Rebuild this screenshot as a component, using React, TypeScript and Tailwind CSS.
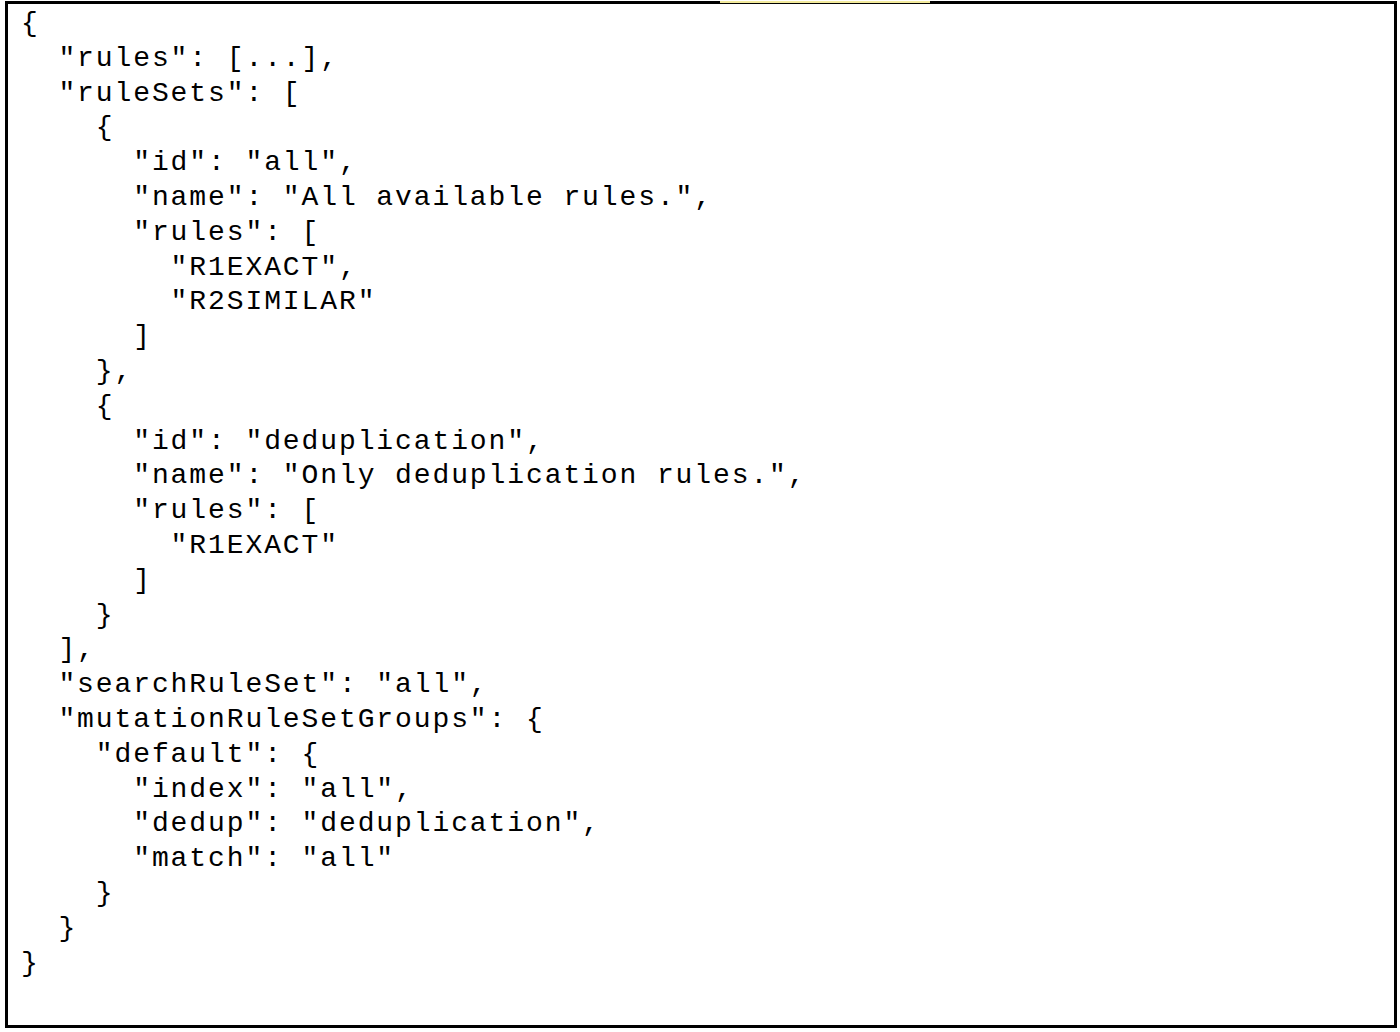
const code = `{
  "rules": [...],
  "ruleSets": [
    {
      "id": "all",
      "name": "All available rules.",
      "rules": [
        "R1EXACT",
        "R2SIMILAR"
      ]
    },
    {
      "id": "deduplication",
      "name": "Only deduplication rules.",
      "rules": [
        "R1EXACT"
      ]
    }
  ],
  "searchRuleSet": "all",
  "mutationRuleSetGroups": {
    "default": {
      "index": "all",
      "dedup": "deduplication",
      "match": "all"
    }
  }
}`;

export default function App() {
  return (
    <div className="relative w-[1400px] h-[1032px] bg-white">
      {/* faint highlight bleeding over the top edge */}
      <div className="absolute top-0 left-[720px] w-[210px] h-[2px] bg-[#f3ea9c]" />
      <div className="ml-[5px] mt-[1px] w-[1392px] h-[1027px] border-[3px] border-black pl-[13px] pt-[3px]">
        <pre className="font-['Liberation_Mono','Courier_New',monospace] text-[28px] tracking-[1.9px] leading-[34.8px] text-black whitespace-pre">
          {code}
        </pre>
      </div>
    </div>
  );
}
